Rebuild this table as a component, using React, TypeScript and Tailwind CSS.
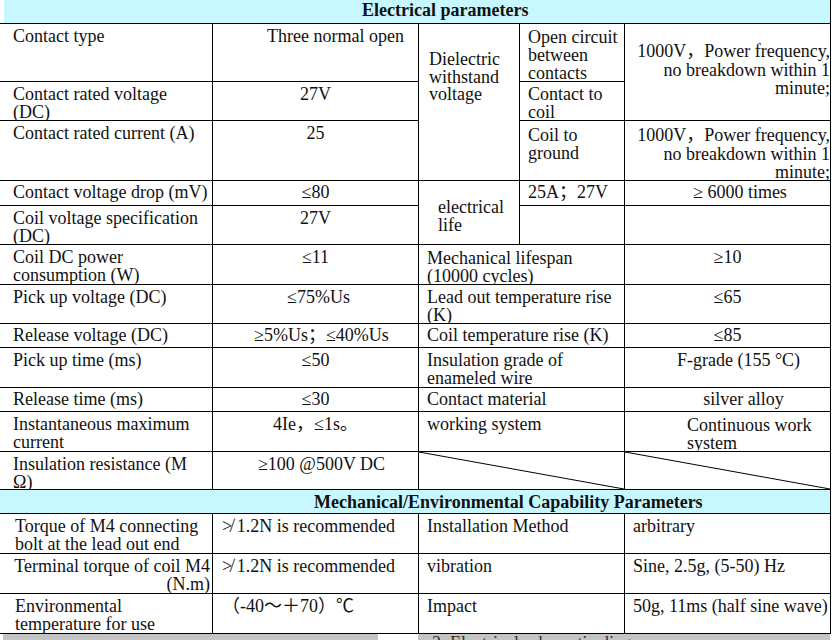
import React from "react";

const Cell = ({ c, children }: { c: string; children?: React.ReactNode }) => (
  <div className={`bg-white whitespace-nowrap ${c}`}>{children}</div>
);

const Diag = () => (
  <svg className="absolute inset-0 w-full h-full" preserveAspectRatio="none" viewBox="0 0 100 100">
    <line x1="0" y1="0" x2="100" y2="100" stroke="#000" strokeWidth="1" vectorEffect="non-scaling-stroke" />
  </svg>
);

export default function App() {
  return (
    <div className="w-[837px] h-[640px] overflow-hidden bg-white text-[#111] font-['Liberation_Serif','Noto_Sans_CJK_SC',serif] text-[18px] leading-[17.5px]">
      <div className="grid w-[831px] gap-px bg-black pr-px pb-px grid-cols-[212px_205px_100px_104px_205px] grid-rows-[23px_57px_38px_59px_24px_38px_39px_38px_23px_39px_23px_39px_37px_23px_39px_39px_39px]">
        {/* Header 1 */}
        <div className="col-start-1 col-span-5 row-start-1 bg-white flex">
          <div className="ml-[4px] flex-1 bg-[#c8f8ff] pl-[358px] pt-[2px] font-bold whitespace-nowrap">Electrical parameters</div>
        </div>

        {/* R1 */}
        <Cell c="col-start-1 row-start-2 pl-[13px] pt-[4px]">Contact type</Cell>
        <Cell c="col-start-2 row-start-2 text-center pl-[40px] pt-[4px]">Three normal open</Cell>
        <Cell c="col-start-3 row-start-2 row-span-3 pl-[10px] pt-[27px]">Dielectric<br />withstand<br />voltage</Cell>
        <Cell c="col-start-4 row-start-2 pl-[8px] pt-[4px] leading-[18px]">Open circuit<br />between<br />contacts</Cell>
        <Cell c="col-start-5 row-start-2 row-span-2 text-right pt-[18px] leading-[18.5px]">1000V，Power frequency,<br />no breakdown within 1<br />minute;</Cell>

        {/* R2 */}
        <Cell c="col-start-1 row-start-3 pl-[13px] pt-[4px]">Contact rated voltage<br />(DC)</Cell>
        <Cell c="col-start-2 row-start-3 text-center pt-[4px]">27V</Cell>
        <Cell c="col-start-4 row-start-3 pl-[8px] pt-[4px]">Contact to<br />coil</Cell>

        {/* R3 */}
        <Cell c="col-start-1 row-start-4 pl-[13px] pt-[4px]">Contact rated current (A)</Cell>
        <Cell c="col-start-2 row-start-4 text-center pt-[4px]">25</Cell>
        <Cell c="col-start-4 row-start-4 pl-[8px] pt-[5px] leading-[18px]">Coil to<br />ground</Cell>
        <Cell c="col-start-5 row-start-4 text-right pt-[5px] leading-[18.5px]">1000V，Power frequency,<br />no breakdown within 1<br />minute;</Cell>

        {/* R4 */}
        <Cell c="col-start-1 row-start-5 pl-[13px] pt-[3px]">Contact voltage drop (mV)</Cell>
        <Cell c="col-start-2 row-start-5 text-center pt-[3px]">≤80</Cell>
        <Cell c="col-start-3 row-start-5 row-span-2 pl-[19px] pt-[18px]">electrical<br />life</Cell>
        <Cell c="col-start-4 row-start-5 pl-[8px] pt-[3px]">25A；27V</Cell>
        <Cell c="col-start-5 row-start-5 pl-[68px] pt-[3px]">≥ 6000 times</Cell>

        {/* R5 */}
        <Cell c="col-start-1 row-start-6 pl-[13px] pt-[4px]">Coil voltage specification<br />(DC)</Cell>
        <Cell c="col-start-2 row-start-6 text-center pt-[4px]">27V</Cell>
        <Cell c="col-start-4 row-start-6"></Cell>
        <Cell c="col-start-5 row-start-6"></Cell>

        {/* R6 */}
        <Cell c="col-start-1 row-start-7 pl-[13px] pt-[4px]">Coil DC power<br />consumption (W)</Cell>
        <Cell c="col-start-2 row-start-7 text-center pt-[4px]">≤11</Cell>
        <Cell c="col-start-3 col-span-2 row-start-7 pl-[8px] pt-[4px] leading-[18px]">Mechanical lifespan<br />(10000 cycles)</Cell>
        <Cell c="col-start-5 row-start-7 text-center pt-[4px]">≥10</Cell>

        {/* R7 */}
        <Cell c="col-start-1 row-start-8 pl-[13px] pt-[4px]">Pick up voltage (DC)</Cell>
        <Cell c="col-start-2 row-start-8 text-center pl-[6px] pt-[4px]">≤75%Us</Cell>
        <Cell c="col-start-3 col-span-2 row-start-8 pl-[8px] pt-[4px]">Lead out temperature rise<br />(K)</Cell>
        <Cell c="col-start-5 row-start-8 text-center pt-[4px]">≤65</Cell>

        {/* R8 */}
        <Cell c="col-start-1 row-start-9 pl-[13px] pt-[3px]">Release voltage (DC)</Cell>
        <Cell c="col-start-2 row-start-9 text-center pl-[12px] pt-[3px]">≥5%Us；≤40%Us</Cell>
        <Cell c="col-start-3 col-span-2 row-start-9 pl-[8px] pt-[3px]">Coil temperature rise (K)</Cell>
        <Cell c="col-start-5 row-start-9 text-center pt-[3px]">≤85</Cell>

        {/* R9 */}
        <Cell c="col-start-1 row-start-10 pl-[13px] pt-[4px]">Pick up time (ms)</Cell>
        <Cell c="col-start-2 row-start-10 text-center pt-[4px]">≤50</Cell>
        <Cell c="col-start-3 col-span-2 row-start-10 pl-[8px] pt-[4px]">Insulation grade of<br />enameled wire</Cell>
        <Cell c="col-start-5 row-start-10 text-center pl-[22px] pt-[4px]">F-grade (155 °C)</Cell>

        {/* R10 */}
        <Cell c="col-start-1 row-start-11 pl-[13px] pt-[3px]">Release time (ms)</Cell>
        <Cell c="col-start-2 row-start-11 text-center pt-[3px]">≤30</Cell>
        <Cell c="col-start-3 col-span-2 row-start-11 pl-[8px] pt-[3px]">Contact material</Cell>
        <Cell c="col-start-5 row-start-11 text-center pl-[32px] pt-[3px]">silver alloy</Cell>

        {/* R11 */}
        <Cell c="col-start-1 row-start-12 pl-[13px] pt-[4px]">Instantaneous maximum<br />current</Cell>
        <Cell c="col-start-2 row-start-12 text-center pt-[4px]">4Ie，≤1s。</Cell>
        <Cell c="col-start-3 col-span-2 row-start-12 pl-[8px] pt-[4px]">working system</Cell>
        <Cell c="col-start-5 row-start-12 pl-[62px] pt-[4px] leading-[18px]">Continuous work<br />system</Cell>

        {/* R12 */}
        <Cell c="col-start-1 row-start-13 pl-[13px] pt-[4px]">Insulation resistance (M<br />Ω)</Cell>
        <Cell c="col-start-2 row-start-13 text-center pl-[12px] pt-[4px]">≥100 @500V DC</Cell>
        <Cell c="col-start-3 col-span-2 row-start-13 relative"><Diag /></Cell>
        <Cell c="col-start-5 row-start-13 relative"><Diag /></Cell>

        {/* Header 2 */}
        <div className="col-start-1 col-span-5 row-start-14 bg-[#c8f8ff] pl-[314px] pt-[4px] font-bold whitespace-nowrap">
          Mechanical/Environmental Capability Parameters
        </div>

        {/* R14 */}
        <Cell c="col-start-1 row-start-15 pl-[15px] pt-[4px]">Torque of M4 connecting<br />bolt at the lead out end</Cell>
        <Cell c="col-start-2 row-start-15 pl-[9px] pt-[4px]">≯ 1.2N is recommended</Cell>
        <Cell c="col-start-3 col-span-2 row-start-15 pl-[8px] pt-[4px]">Installation Method</Cell>
        <Cell c="col-start-5 row-start-15 pl-[8px] pt-[4px]">arbitrary</Cell>

        {/* R15 */}
        <Cell c="col-start-1 row-start-16 text-right pr-[2px] pt-[4px]">Terminal torque of coil M4<br />(N.m)</Cell>
        <Cell c="col-start-2 row-start-16 pl-[9px] pt-[4px]">≯ 1.2N is recommended</Cell>
        <Cell c="col-start-3 col-span-2 row-start-16 pl-[8px] pt-[4px]">vibration</Cell>
        <Cell c="col-start-5 row-start-16 pl-[8px] pt-[4px]">Sine, 2.5g, (5-50) Hz</Cell>

        {/* R16 */}
        <Cell c="col-start-1 row-start-17 pl-[15px] pt-[4px]">Environmental<br />temperature for use</Cell>
        <Cell c="col-start-2 row-start-17 pl-[9px] pt-[4px]">（-40～＋70）℃</Cell>
        <Cell c="col-start-3 col-span-2 row-start-17 pl-[8px] pt-[4px]">Impact</Cell>
        <Cell c="col-start-5 row-start-17 pl-[8px] pt-[4px]">50g, 11ms (half sine wave)</Cell>
      </div>

      {/* bottom gray strip */}
      <div className="flex h-[6px]">
        <div className="ml-[3px] w-[375px] bg-[#c4c4c4]"></div>
        <div className="ml-[40px] w-[412px] bg-[#c4c4c4] overflow-hidden">
          <div className="pl-[14px] mt-[1px] whitespace-nowrap text-[#333]">2. Electrical schematic diagram</div>
        </div>
      </div>
    </div>
  );
}
